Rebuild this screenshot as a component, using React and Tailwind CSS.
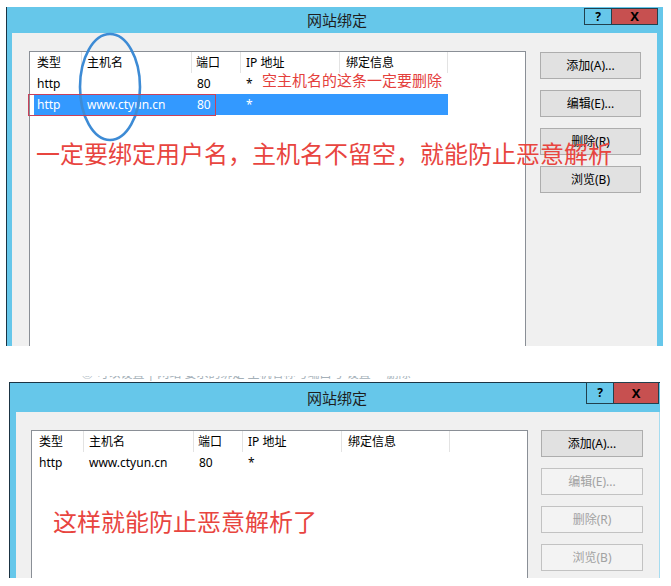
import React from "react";

const HEAD = ["类型", "主机名", "端口", "IP 地址", "绑定信息"];

function ListView({ rows }) {
  const widths = ["w-[52px]", "w-[110px]", "w-[49px]", "w-[99px]", "w-[108px]"];
  const pads = ["pl-[7px]", "pl-[5px]", "pl-[4px]", "pl-[5px]", "pl-[6px]"];
  return (
    <div className="w-[497px] self-stretch bg-white border border-b-0 border-[#8a8f96]">
      <div className="flex h-[21px]">
        {HEAD.map((h, i) => (
          <div
            key={h}
            className={`${widths[i]} ${pads[i]} border-r border-[#e3e3e3] text-[12px] leading-[21px] text-black`}
          >
            {h}
          </div>
        ))}
      </div>
      {rows.map((r, ri) =>
        r.sel ? (
          <div key={ri} className="flex h-[21px]">
            <div className="ml-[4px] flex bg-[#3399ff] text-white">
              <div className="w-[48px] pl-[3px] text-[12px] leading-[21px]">{r.c[0]}</div>
              <div className="w-[110px] pl-[5px] text-[12px] leading-[21px]">{r.c[1]}</div>
              <div className="w-[49px] pl-[5px] text-[12px] leading-[21px]">{r.c[2]}</div>
              <div className="w-[99px] pl-[5px] text-[12px] leading-[21px]">{r.c[3]}</div>
              <div className="w-[108px] pl-[6px] text-[12px] leading-[21px]">{r.c[4]}</div>
            </div>
          </div>
        ) : (
          <div key={ri} className="flex h-[21px] text-black">
            <div className="w-[52px] pl-[7px] text-[12px] leading-[21px]">{r.c[0]}</div>
            <div className="w-[110px] pl-[5px] text-[12px] leading-[21px]">{r.c[1]}</div>
            <div className="w-[49px] pl-[5px] text-[12px] leading-[21px]">{r.c[2]}</div>
            <div className="w-[99px] pl-[5px] text-[12px] leading-[21px]">{r.c[3]}</div>
            <div className="w-[108px] pl-[6px] text-[12px] leading-[21px]">{r.c[4]}</div>
          </div>
        )
      )}
    </div>
  );
}

function Btn({ children, disabled }) {
  return disabled ? (
    <div className="flex items-center justify-center w-[102px] h-[27px] border border-[#c2c2c2] bg-[#f3f3f3] text-[12px] text-[#a2a2a2]">
      {children}
    </div>
  ) : (
    <div className="flex items-center justify-center w-[101px] h-[27px] border border-[#adadad] bg-[#e1e1e1] text-[12px] text-black">
      {children}
    </div>
  );
}

function Btn2({ children, disabled }) {
  return disabled ? (
    <div className="flex items-center justify-center w-[102px] h-[27px] border border-[#c2c2c2] bg-[#f3f3f3] text-[12px] text-[#a2a2a2]">
      {children}
    </div>
  ) : (
    <div className="flex items-center justify-center w-[102px] h-[27px] border border-[#adadad] bg-[#e1e1e1] text-[12px] text-black">
      {children}
    </div>
  );
}

export default function App() {
  return (
    <div className="relative w-[671px] h-[586px] overflow-hidden bg-white font-['Noto_Sans','Noto_Sans_CJK_SC',sans-serif]">
      {/* Dialog 1 */}
      <div className="pt-[7px] pl-[6px]">
        <div className="flex flex-col w-[657px] h-[339px] border-l border-[#1b3444] bg-[#66c7ea]">
          <div className="flex h-[26px]">
            <div className="w-[83px]" />
            <div className="flex-1 text-center pt-[3px] text-[15px] leading-[20px] text-[#1e1e1e]">网站绑定</div>
            <div className="flex mt-[1px] mr-[5px] h-[17px]">
              <div className="flex items-center justify-center w-[28px] border border-[#21404d] bg-[#66c7ea] text-[12px] font-bold text-black leading-none">?</div>
              <div className="flex items-center justify-center w-[46px] border border-l-0 border-[#21404d] bg-[#c75050] text-[13px] font-bold text-black leading-none">X</div>
            </div>
          </div>
          <div className="flex flex-1 pl-[5px] pr-[6px]">
            <div className="flex flex-1 gap-[14px] pl-[17px] pt-[18px] bg-[#f0f0f0]">
              <ListView
                rows={[
                  { c: ["http", "", "80", "*", ""] },
                  { sel: true, c: ["http", "www.ctyun.cn", "80", "*", ""] },
                ]}
              />
              <div className="flex flex-col gap-[11px] pt-[1px]">
                <Btn>添加(A)...</Btn>
                <Btn>编辑(E)...</Btn>
                <Btn>删除(R)</Btn>
                <Btn>浏览(B)</Btn>
              </div>
            </div>
          </div>
        </div>
      </div>

      {/* faint background text strip */}
      <div className="mt-[30px] h-[6px] overflow-hidden pl-[75px] text-[12px] leading-[14px] text-[#a4b0b8]">
        <div className="-mt-[9px] whitespace-nowrap">·  ◎ 可以设置  |  网站 要求的绑定 主机名称与端口号 设置 ·         ·  删除</div>
      </div>

      {/* Dialog 2 */}
      <div className="pl-[9px]">
        <div className="flex flex-col w-[651px] h-[196px] border-t border-l border-[#1b3444] bg-[#66c7ea]">
          <div className="flex h-[29px]">
            <div className="w-[78px]" />
            <div className="flex-1 text-center pt-[5px] text-[15px] leading-[20px] text-[#1e1e1e]">网站绑定</div>
            <div className="flex -mt-[1px] mr-[1px] h-[22px]">
              <div className="flex items-center justify-center w-[28px] border border-[#21404d] bg-[#66c7ea] text-[12px] font-bold text-black leading-none">?</div>
              <div className="flex items-center justify-center w-[45px] border border-l-0 border-[#21404d] bg-[#c75050] text-[13px] font-bold text-black leading-none">X</div>
            </div>
          </div>
          <div className="flex flex-1 pl-[6px]">
            <div className="flex flex-1 gap-[13px] pl-[15px] pt-[18px] bg-[#f0f0f0]">
              <ListView rows={[{ c: ["http", "www.ctyun.cn", "80", "*", ""] }]} />
              <div className="flex flex-col gap-[11px]">
                <Btn2>添加(A)...</Btn2>
                <Btn2 disabled>编辑(E)...</Btn2>
                <Btn2 disabled>删除(R)</Btn2>
                <Btn2 disabled>浏览(B)</Btn2>
              </div>
            </div>
            <div className="w-[1px] bg-[#a6dcf0]" />
          </div>
        </div>
      </div>

      {/* annotations */}
      <svg className="absolute left-[76px] top-[30px]" width="70" height="116" viewBox="0 0 70 116">
        <ellipse cx="34" cy="57" rx="30" ry="53" fill="none" stroke="#3d8bd5" strokeWidth="2.6" />
      </svg>
      <div className="absolute left-[28px] top-[94px] w-[188px] h-[22px] border border-[#c9415a]" />
      <div className="absolute left-[262px] top-[70px] text-[15px] leading-[20px] text-[#e4403c] whitespace-nowrap">
        空主机名的这条一定要删除
      </div>
      <div className="absolute left-[36px] top-[141px] text-[24px] leading-[26px] text-[#e8453f] whitespace-nowrap">
        一定要绑定用户名，主机名不留空，就能防止恶意解析
      </div>
      <div className="absolute left-[53px] top-[509px] text-[24px] leading-[26px] text-[#e8453f] whitespace-nowrap">
        这样就能防止恶意解析了
      </div>
    </div>
  );
}
